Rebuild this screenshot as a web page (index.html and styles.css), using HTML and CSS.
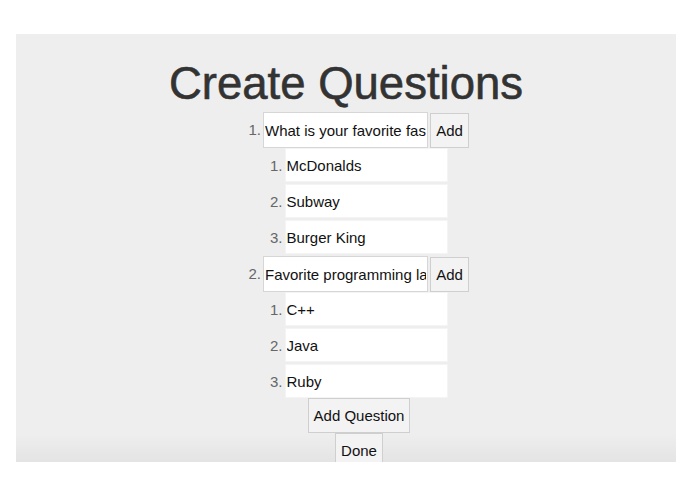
FILE: index.html
```html
<!DOCTYPE html>
<html>
<head>
<meta charset="utf-8">
<title>Create Questions</title>
<link rel="stylesheet" href="styles.css">
</head>
<body>
<div class="panel">
  <h1 class="title">Create Questions</h1>
  <ol class="questions">
    <li class="question">
      <div class="q-row">
        <input class="q-input" type="text" value="What is your favorite fast food restaurant?">
        <button class="btn add-btn">Add</button>
      </div>
      <ol class="answers">
        <li class="answer"><input class="a-input" type="text" value="McDonalds"></li>
        <li class="answer"><input class="a-input" type="text" value="Subway"></li>
        <li class="answer"><input class="a-input" type="text" value="Burger King"></li>
      </ol>
    </li>
    <li class="question">
      <div class="q-row">
        <input class="q-input" type="text" value="Favorite programming language?">
        <button class="btn add-btn">Add</button>
      </div>
      <ol class="answers">
        <li class="answer"><input class="a-input" type="text" value="C++"></li>
        <li class="answer"><input class="a-input" type="text" value="Java"></li>
        <li class="answer"><input class="a-input" type="text" value="Ruby"></li>
      </ol>
    </li>
  </ol>
  <div class="actions">
    <button class="btn action-btn">Add Question</button>
    <button class="btn action-btn">Done</button>
  </div>
</div>
</body>
</html>
```

FILE: styles.css
```css
html, body {
  margin: 0;
  padding: 0;
  background: #ffffff;
}

body {
  font-family: "Liberation Sans", Arial, Helvetica, sans-serif;
  color: #222;
}

.panel {
  margin: 34px 19px 0 16px;
  height: 428px;
  box-sizing: border-box;
  padding-top: 24px;
  overflow: hidden;
  background: linear-gradient(#eeeeee calc(100% - 28px), #e4e4e4);
}

.title {
  margin: 0 0 2px 0;
  font-size: 45.5px;
  line-height: 52px;
  font-weight: normal;
  color: #333;
  -webkit-text-stroke: 0.6px #333;
  text-align: center;
}

.questions {
  list-style: none;
  margin: 0;
  padding: 0 0 0 40px;
  counter-reset: q;
}

.question {
  counter-increment: q;
}

.question + .question {
  margin-top: 2px;
}

.q-row {
  display: flex;
  justify-content: center;
  align-items: flex-start;
  height: 35px;
}

.q-row::before {
  content: counter(q) ".";
  width: 24px;
  margin-left: -24px;
  padding-right: 2px;
  box-sizing: border-box;
  text-align: right;
  font-size: 15px;
  line-height: 36px;
  color: #666;
}

.q-input,
.a-input {
  font-family: "Liberation Sans", Arial, Helvetica, sans-serif;
  font-size: 15px;
  color: #111;
  background: #fff;
  margin: 0;
  padding: 0 1px;
  box-sizing: border-box;
  outline: none;
  border-radius: 0;
}

.q-input {
  width: 165px;
  height: 36px;
  border: 1px solid #d6d6d6;
}

.btn {
  font-family: "Liberation Sans", Arial, Helvetica, sans-serif;
  font-size: 15px;
  color: #111;
  background: #f3f3f3;
  border: 1px solid #cfcfcf;
  border-radius: 0;
  padding: 0 5px;
  margin: 0;
  box-sizing: border-box;
  height: 35px;
}

.add-btn {
  margin-left: 2px;
  margin-top: 1px;
  width: 39px;
  padding: 0;
}

.answers {
  list-style: none;
  margin: 0;
  padding: 1px 0 0 0;
  counter-reset: a;
}

.answer {
  counter-increment: a;
  display: flex;
  justify-content: center;
  align-items: center;
  margin: 0 0 2px 0;
  height: 34px;
}

.answer:last-child {
  margin-bottom: 0;
}

.answer::before {
  content: counter(a) ".";
  width: 24px;
  margin-left: -24px;
  padding-right: 2px;
  box-sizing: border-box;
  text-align: right;
  font-size: 15px;
  color: #666;
}

.a-input {
  width: 163px;
  height: 34px;
  border: 1px solid #f4f4f4;
}

.actions {
  display: flex;
  flex-direction: column;
  align-items: center;
  padding-left: 26px;
}

.action-btn {
  height: 35px;
}
```
